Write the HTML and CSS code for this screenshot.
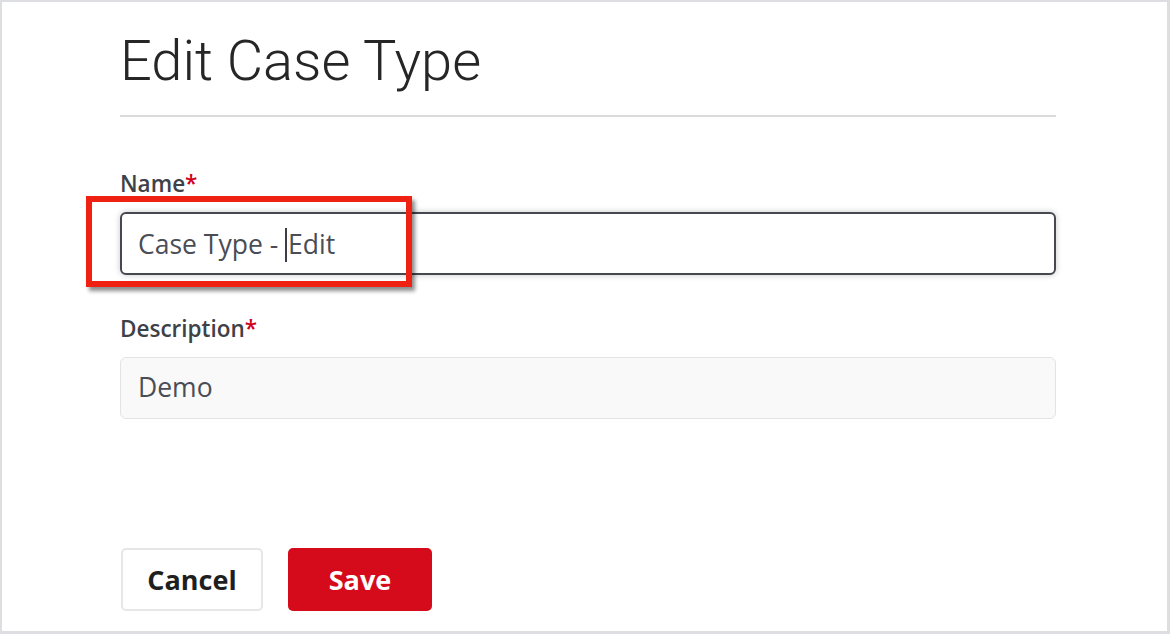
FILE: index.html
```html
<!DOCTYPE html>
<html lang="en">
<head>
<meta charset="utf-8">
<title>Edit Case Type</title>
<link rel="stylesheet" href="styles.css">
</head>
<body>
<div class="page">
  <main class="form">
    <h1 class="title">Edit Case Type</h1>
    <div class="field field-name">
      <label class="label">Name<span class="req">*</span></label>
      <div class="input input-focused">
        <span class="value">Case Type - <span class="caret"></span>Edit</span>
        <div class="highlight"></div>
      </div>
    </div>
    <div class="field field-desc">
      <label class="label">Description<span class="req">*</span></label>
      <div class="input input-readonly"><span class="value">Demo</span></div>
    </div>
    <div class="actions">
      <button class="btn btn-cancel">Cancel</button>
      <button class="btn btn-save">Save</button>
    </div>
  </main>
</div>
</body>
</html>
```
FILE: styles.css
```css
* { box-sizing: border-box; }
html, body { margin: 0; padding: 0; background: #ffffff; }
body { font-family: "Open Sans", "Liberation Sans", sans-serif; }

.page {
  width: 1170px;
  height: 634px;
  border-top: 2px solid #dcdee1;
  border-left: 2px solid #dcdee1;
  border-right: 3px solid #dcdee1;
  border-bottom: 3px solid #dcdee1;
  background: #fff;
  overflow: hidden;
}

.form {
  width: 936px;
  margin-left: 118px;
  display: flex;
  flex-direction: column;
}

.title {
  margin: 25px 0 0 0;
  font-family: Roboto, "Liberation Sans", sans-serif;
  font-size: 56px;
  font-weight: 300;
  line-height: 68px;
  color: #262626;
  padding-bottom: 20px;
  border-bottom: 2px solid #dadada;
  letter-spacing: 0;
}

.field { display: flex; flex-direction: column; }
.field-name { margin-top: 55px; }
.field-desc { margin-top: 42px; }

.label {
  font-size: 22.5px;
  font-weight: 600;
  line-height: 24px;
  color: #3e4148;
  margin-bottom: 16px;
}
.req { color: #d0021b; }

.input {
  position: relative;
  height: 63px;
  border-radius: 6px;
  padding: 14px 16px 15px 16px;
  font-size: 26.5px;
  line-height: 30px;
  color: #4a4d55;
}
.input-focused {
  border: 2px solid #45484e;
  background: #fff;
  box-shadow: 0 0 6px rgba(0, 0, 0, 0.22);
}
.input-readonly {
  height: 62px;
  border: 1.5px solid #e3e3e3;
  background: #f9f9f9;
  padding: 14px 16px 15px 17px;
}

.caret {
  display: inline-block;
  width: 2px;
  height: 34px;
  background: #3b3e44;
  vertical-align: -8px;
  margin-right: 1px;
}

.highlight {
  position: absolute;
  left: -36px;
  top: -18px;
  width: 326px;
  height: 91px;
  border: 6px solid #ef2112;
  box-shadow: 3px 4px 4px rgba(0, 0, 0, 0.45);
  pointer-events: none;
}

.actions {
  display: flex;
  gap: 25px;
  margin-top: 129px;
  margin-left: 1px;
}

.btn {
  height: 63px;
  border-radius: 5px;
  font-family: "Open Sans", "Liberation Sans", sans-serif;
  font-size: 27px;
  font-weight: 700;
  padding: 0;
  display: flex;
  align-items: center;
  justify-content: center;
}
.btn-cancel {
  width: 142px;
  background: #fff;
  border: 2px solid #e6e6e6;
  color: #1f1f1f;
}
.btn-save {
  width: 144px;
  background: #d50b1b;
  border: none;
  color: #fff;
}
```
